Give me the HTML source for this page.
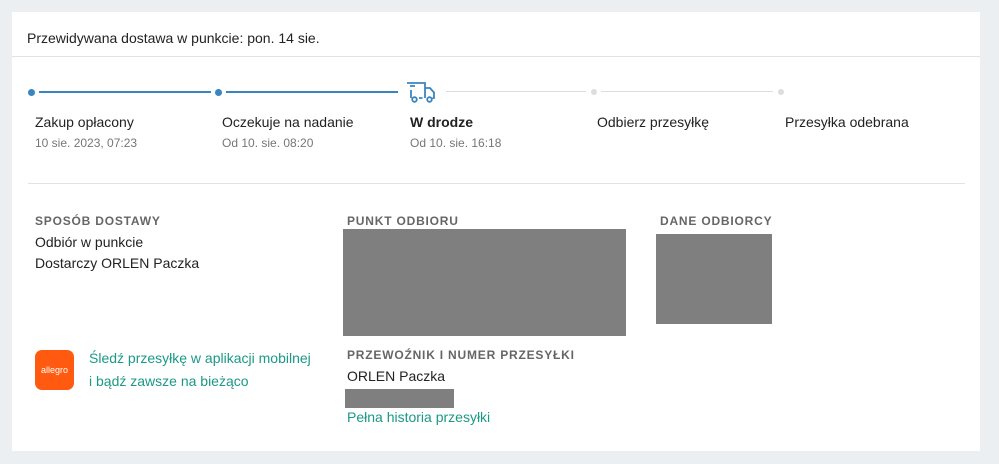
<!DOCTYPE html><html><head><meta charset="utf-8"><style>
body{margin:0;width:999px;height:464px;background:#eceff2;font-family:"Liberation Sans",sans-serif;position:relative;overflow:hidden;color:#222}
.card{position:absolute;left:12px;top:12px;width:968px;height:439px;background:#fff}
.a{position:absolute;white-space:nowrap}
.t{font-size:14px;color:#222}
.d{font-size:12px;color:#767676}
.h{font-size:12px;color:#666;letter-spacing:.8px;font-weight:bold}
.g{background:#7f7f7f;position:absolute}
.lk{color:#1a9985;font-size:14px}
</style></head><body><div class="card"></div>
<div class="a t" style="left:27px;top:30px;font-size:14px">Przewidywana dostawa w punkcie: pon. 14 sie.</div>
<div style="position:absolute;left:12px;top:56px;width:968px;height:1px;background:#e2e2e2"></div>
<div style="position:absolute;left:28px;top:89px;width:7px;height:7px;border-radius:50%;background:#3a85c0"></div>
<div style="position:absolute;left:39px;top:91px;width:172px;height:2px;background:#3a85c0"></div>
<div style="position:absolute;left:215px;top:89px;width:7px;height:7px;border-radius:50%;background:#3a85c0"></div>
<div style="position:absolute;left:226px;top:91px;width:172px;height:2px;background:#3a85c0"></div>
<svg style="position:absolute;left:405px;top:80px" width="32" height="24" viewBox="0 0 32 24" fill="none" stroke="#3a85c0" stroke-width="1.8"><path d="M2 3h18v15M5 6h5M6 10v8M20 8h5l4 4.5v5.5h-1.5M14 18h3.5"/><circle cx="9.5" cy="19.5" r="2.3"/><circle cx="24.5" cy="19.5" r="2.3"/></svg>
<div style="position:absolute;left:446px;top:91px;width:140px;height:1px;background:#ddd"></div>
<div style="position:absolute;left:591px;top:89px;width:6px;height:6px;border-radius:50%;background:#ddd"></div>
<div style="position:absolute;left:601px;top:91px;width:172px;height:1px;background:#ddd"></div>
<div style="position:absolute;left:778px;top:89px;width:6px;height:6px;border-radius:50%;background:#ddd"></div>
<div class="a t" style="left:35px;top:114px">Zakup opłacony</div><div class="a d" style="left:35px;top:136px">10 sie. 2023, 07:23</div>
<div class="a t" style="left:222px;top:114px">Oczekuje na nadanie</div><div class="a d" style="left:222px;top:136px">Od 10. sie. 08:20</div>
<div class="a t" style="left:410px;top:114px;font-weight:bold">W drodze</div><div class="a d" style="left:410px;top:136px">Od 10. sie. 16:18</div>
<div class="a t" style="left:597px;top:114px">Odbierz przesyłkę</div>
<div class="a t" style="left:785px;top:114px">Przesyłka odebrana</div>
<div style="position:absolute;left:28px;top:183px;width:937px;height:1px;background:#e2e2e2"></div>
<div class="a h" style="left:35px;top:214px">SPOSÓB DOSTAWY</div>
<div class="a t" style="left:35px;top:234px">Odbiór w punkcie</div>
<div class="a t" style="left:35px;top:255px">Dostarczy ORLEN Paczka</div>
<div class="a h" style="left:347px;top:214px">PUNKT ODBIORU</div>
<div class="g" style="left:343px;top:229px;width:283px;height:107px"></div>
<div class="a h" style="left:660px;top:214px">DANE ODBIORCY</div>
<div class="g" style="left:656px;top:234px;width:116px;height:90px"></div>
<div style="position:absolute;left:35px;top:350px;width:39px;height:40px;border-radius:7px;background:#ff5a0f;color:#fff;font-size:9px;text-align:center;line-height:40px">allegro</div>
<div class="a lk" style="left:89px;top:350px">Śledź przesyłkę w aplikacji mobilnej</div>
<div class="a lk" style="left:89px;top:373px">i bądź zawsze na bieżąco</div>
<div class="a h" style="left:347px;top:348px">PRZEWOŹNIK I NUMER PRZESYŁKI</div>
<div class="a t" style="left:347px;top:368px">ORLEN Paczka</div>
<div class="g" style="left:345px;top:389px;width:109px;height:19px"></div>
<div class="a lk" style="left:347px;top:409px">Pełna historia przesyłki</div>
</body></html>
